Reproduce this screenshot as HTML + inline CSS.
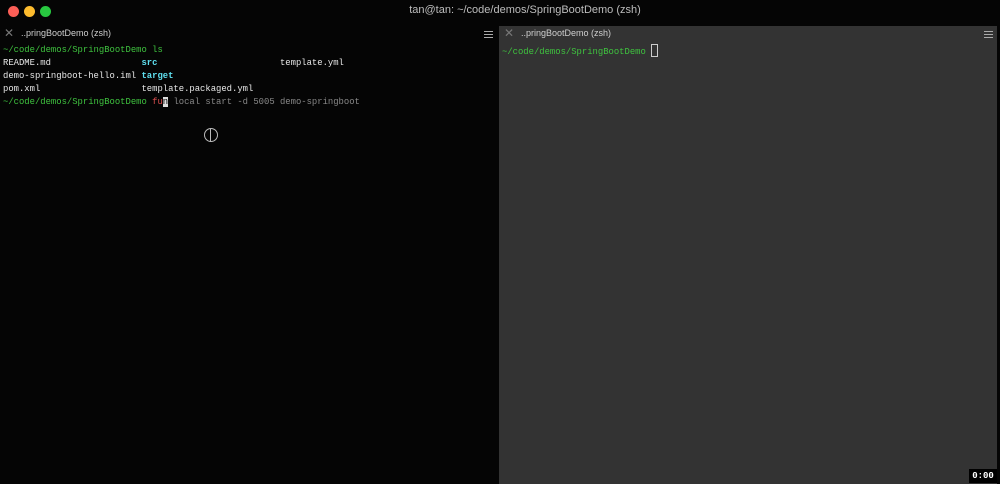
<!DOCTYPE html>
<html><head><style>
*{margin:0;padding:0;box-sizing:border-box}
body{width:1000px;height:484px;background:#050505;overflow:hidden;position:relative;font-family:"Liberation Sans",sans-serif}
.dot{position:absolute;top:6px;width:11px;height:11px;border-radius:50%}
.title{position:absolute;top:4px;left:0;width:1000px;text-align:center;color:#bdbdbd;font-size:11px;padding-left:50px}
.tab{position:absolute;top:28px;font-size:9px;color:#cfcfcf}
.x{position:absolute;font-size:12px;color:#777;top:26px}
.ham{position:absolute;width:9px;height:7px;border-top:1.5px solid #aaa;border-bottom:1.5px solid #aaa}
.ham:after{content:"";position:absolute;left:0;right:0;top:1.5px;border-top:1.5px solid #aaa}
.term{position:absolute;font-family:"Liberation Mono",monospace;font-size:8.9px;line-height:13px;color:#e8e8e8;white-space:pre}
.g{color:#3fc33f}.c{color:#5fe0f0;font-weight:bold}.r{color:#e05050}.d{color:#888}
#right{position:absolute;left:499px;top:26px;width:498px;height:458px;background:#333}
</style></head><body>
<div class="dot" style="left:8px;background:#fc5f57"></div>
<div class="dot" style="left:24px;background:#fdbc2e"></div>
<div class="dot" style="left:40px;background:#28c840"></div>
<div class="title">tan@tan: ~/code/demos/SpringBootDemo (zsh)</div>
<div class="x" style="left:4px">✕</div>
<div class="tab" style="left:21px">..pringBootDemo (zsh)</div>
<div class="ham" style="left:484px;top:31px"></div>
<div class="term" style="left:3px;top:44px"><span class="g">~/code/demos/SpringBootDemo ls</span>
README.md                 <span class="c">src</span>                       template.yml
demo-springboot-hello.iml <span class="c">target</span>
pom.xml                   template.packaged.yml
<span class="g">~/code/demos/SpringBootDemo</span> <span class="r">fu</span><span style="background:#ddd;color:#000">n</span><span class="d"> local start -d 5005 demo-springboot</span></div>
<div style="position:absolute;left:204px;top:128px;width:14px;height:14px;border:1px solid #bbb;border-radius:50%"></div>
<div style="position:absolute;left:210px;top:129px;width:1px;height:13px;background:#bbb"></div>
<div id="right">
<div class="x" style="left:5px;top:0">✕</div>
<div class="tab" style="left:22px;top:2px">..pringBootDemo (zsh)</div>
<div class="ham" style="left:485px;top:5px"></div>
<div class="term" style="left:3px;top:18px"><span class="g">~/code/demos/SpringBootDemo</span> <span style="display:inline-block;width:7px;height:13px;border:1px solid #ccc;vertical-align:-3px"></span></div>
</div>
<div style="position:absolute;left:969px;top:469px;width:28px;height:14px;background:#000;color:#fff;font-family:'Liberation Mono',monospace;font-size:9px;font-weight:bold;text-align:center;line-height:14px">0:00</div>
</body></html>
